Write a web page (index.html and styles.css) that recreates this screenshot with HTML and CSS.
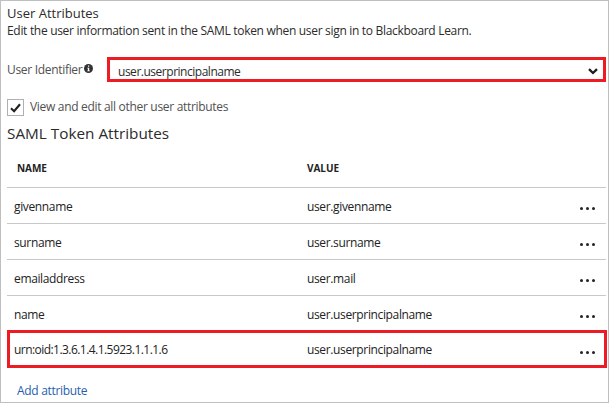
FILE: index.html
```html
<!DOCTYPE html>
<html lang="en">
<head>
<meta charset="utf-8">
<title>User Attributes</title>
<link rel="stylesheet" href="styles.css">
</head>
<body>
<main class="panel">
  <h1 class="title"><span>User Attributes</span></h1>
  <p class="description"><span>Edit the user information sent in the SAML token when user sign in to Blackboard Learn.</span></p>
  <div class="field">
    <label class="field-label"><span>User Identifier</span></label>
    <svg class="info" viewBox="0 0 9 9"><circle cx="4.5" cy="4.5" r="4.5" fill="#333"/><path d="M4 1.5h1.2v1.2H4zM3.3 3.7h1.9v2.8h.6v.8H3.3v-.8h.6v-2h-.6z" fill="#fff"/></svg>
    <div class="select"><span>user.userprincipalname</span>
      <svg class="chevron" viewBox="0 0 10 7"><path d="M1 1.2 5 5 9 1.2" fill="none" stroke="#1c1c1c" stroke-width="2.3"/></svg>
    </div>
  </div>
  <div class="check-row">
    <div class="checkbox"><svg viewBox="0 0 11 10"><path d="M1 5.2 4.1 8.2 10 1.2" fill="none" stroke="#222" stroke-width="2.1"/></svg></div>
    <span class="check-label">View and edit all other user attributes</span>
  </div>
  <h2 class="subtitle"><span>SAML Token Attributes</span></h2>
  <div class="table">
    <div class="row head"><span class="name"><b>NAME</b></span><span class="value"><b>VALUE</b></span></div>
    <div class="row"><span class="name">givenname</span><span class="value">user.givenname</span><span class="more"><i></i><i></i><i></i></span></div>
    <div class="row"><span class="name">surname</span><span class="value">user.surname</span><span class="more"><i></i><i></i><i></i></span></div>
    <div class="row"><span class="name">emailaddress</span><span class="value">user.mail</span><span class="more"><i></i><i></i><i></i></span></div>
    <div class="row last"><span class="name">name</span><span class="value">user.userprincipalname</span><span class="more"><i></i><i></i><i></i></span></div>
    <div class="row marked"><span class="name oid">urn:oid:1.3.6.1.4.1.5923.1.1.1.6</span><span class="value">user.userprincipalname</span><span class="more"><i></i><i></i><i></i></span></div>
  </div>
  <a class="add">Add attribute</a>
</main>
</body>
</html>
```
FILE: styles.css
```css
* { box-sizing: border-box; }
body {
  margin: 0;
  background: #fff;
  color: #2b2b2b;
  font-family: "Open Sans", "Noto Sans", sans-serif;
  font-size: 12px;
  letter-spacing: -0.31px;
}
.panel {
  display: flex;
  flex-direction: column;
  width: 609px;
  height: 403px;
  padding: 4px 0 0 6px;
  border: 1px solid #bfbfbf;
  overflow: hidden;
  white-space: nowrap;
}
.title, .description, .subtitle { margin: 0; font-weight: 400; }
.title { height: 17px; font-size: 13px; line-height: 17px; letter-spacing: 0; }
.description { height: 17px; line-height: 18px; }
.field { display: flex; height: 25px; margin-top: 18px; }
.field-label { width: 77px; height: 24px; line-height: 25px; color: #505050; }
.info { width: 9px; height: 9px; margin-top: 7px; }
.select {
  display: flex;
  align-items: center;
  justify-content: space-between;
  width: 499px;
  height: 25px;
  margin-left: 14px;
  padding: 3px 5px 0 8px;
  border: 3px solid #ed1c24;
  letter-spacing: -0.48px;
}
.chevron { width: 10px; height: 7px; }
.check-row { display: flex; height: 17px; margin-top: 17px; }
.checkbox {
  display: flex;
  align-items: center;
  justify-content: center;
  width: 17px;
  height: 17px;
  border: 1px solid #b0b0b0;
}
.checkbox svg { width: 11px; height: 10px; }
.check-label { margin-left: 6px; line-height: 15px; color: #505050; }
.subtitle { height: 22px; margin-top: 6px; font-size: 15.3px; line-height: 22px; letter-spacing: 0; }
.table { display: flex; flex-direction: column; margin-top: 4px; }
.row {
  display: flex;
  align-items: center;
  width: 599px;
  height: 36px;
  padding: 1px 0 0 7px;
  border-bottom: 1px solid #c8c8c8;
  font-weight: 500;
  letter-spacing: -0.36px;
  color: #222;
}
.name { width: 293px; }
.value { width: 273px; }
.head { height: 40px; padding: 0 0 0 10px; font-size: 10px; letter-spacing: -0.05px; }
.head .name { width: 290px; }
.head b { font-weight: 700; }
.last { height: 34px; padding-top: 2px; border-bottom: 0; }
.marked { width: 600px; height: 38px; padding-left: 4px; border: 3px solid #ed1c24; }
.oid { letter-spacing: -0.55px; }
.more { display: flex; gap: 3px; padding-top: 5px; }
.more i { width: 3px; height: 3px; background: #222; border-radius: 1.5px; }
.add { height: 20px; margin: 12px 0 0 10px; line-height: 21px; color: #1f5fae; }
```
